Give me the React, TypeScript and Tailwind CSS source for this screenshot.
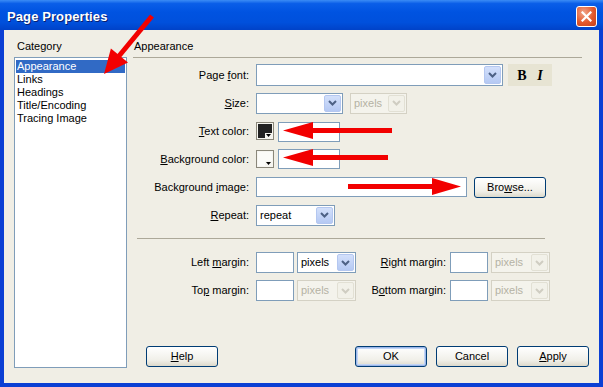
import React from "react";

const U = ({ children }: { children: React.ReactNode }) => <span className="underline underline-offset-[1px]">{children}</span>;

const Chevron = ({ disabled }: { disabled?: boolean }) => (
  <div
    className={
      disabled
        ? "w-[17px] h-full flex items-center justify-center rounded-[2px] bg-[#f2f1e9] border border-[#e2e0d4]"
        : "w-[17px] h-full flex items-center justify-center rounded-[2px] bg-[linear-gradient(#d3e0fb,#b5c9f3)] border border-[#b4c7f0]"
    }
  >
    <svg width="9" height="6" viewBox="0 0 9 6">
      <path d="M1 1 L4.5 4.5 L8 1" stroke={disabled ? "#cfcdc2" : "#4d6185"} strokeWidth="2" fill="none" />
    </svg>
  </div>
);

const Select = ({ w, text, disabled }: { w: string; text?: string; disabled?: boolean }) => (
  <div
    className={
      (disabled
        ? "border-[#d4d1c4] bg-[#f4f3ec] text-[#b5b2a4] "
        : "border-[#7f9db9] bg-white text-black ") + w + " h-[21px] flex border p-[1px]"
    }
  >
    <div className="flex-1 pl-[2px] leading-[17px]">{text}</div>
    <Chevron disabled={disabled} />
  </div>
);

const Input = ({ w, h = "h-[21px]" }: { w: string; h?: string }) => (
  <div className={w + " " + h + " border border-[#7f9db9] bg-white"} />
);

const Swatch = ({ dark }: { dark?: boolean }) => (
  <div className="w-[18px] h-[18px] border border-[#8a877a] bg-[#f6f5f0] p-[1px] relative">
    <div className={(dark ? "bg-[#222]" : "bg-[#fbfbf8]") + " w-full h-full"} />
    <div className="absolute right-[1px] bottom-[1px] w-[7px] h-[5px] bg-[#f6f5f0] flex items-center justify-center">
      <svg width="5" height="3" viewBox="0 0 5 3">
        <path d="M0 0 H5 L2.5 3 Z" fill="#000" />
      </svg>
    </div>
  </div>
);

const Btn = ({ children, def, cls = "" }: { children: React.ReactNode; def?: boolean; cls?: string }) => (
  <div
    className={
      "w-[72px] h-[21px] rounded-[3px] border border-[#003c74] bg-[linear-gradient(#ffffff,#f0efe8_70%,#dcd9cb)] flex items-center justify-center " +
      (def ? "shadow-[inset_0_0_0_1px_#9cb7e9,inset_0_0_0_2px_#c2d5f6] " : "") +
      cls
    }
  >
    {children}
  </div>
);

const Label = ({ children }: { children: React.ReactNode }) => (
  <div className="w-[117px] text-right pr-[1px]">{children}</div>
);

export default function App() {
  return (
    <div className="w-[603px] h-[387px] relative bg-[#0b3fd4] font-['Liberation_Sans',Arial,sans-serif] text-[11px] text-black flex flex-col overflow-hidden">
      {/* title bar */}
      <div className="h-[30px] shrink-0 bg-[linear-gradient(#3b8cf5_0%,#0a5ee8_12%,#0053e1_40%,#0050dc_75%,#0042c8_100%)] flex items-center pl-[7px] pr-[6px]">
        <div className="text-white font-bold text-[13px] tracking-[0.1px] [text-shadow:1px_1px_0_#0a1f6e] flex-1 pt-[3px]">
          Page Properties
        </div>
        <div className="w-[21px] h-[21px] rounded-[3px] border border-white bg-[radial-gradient(circle_at_35%_30%,#f0a58a,#e2582c_55%,#c4401a)] flex items-center justify-center mt-[2px]">
          <svg width="11" height="11" viewBox="0 0 11 11">
            <path d="M1.5 1.5 L9.5 9.5 M9.5 1.5 L1.5 9.5" stroke="#fff" strokeWidth="2.2" strokeLinecap="square" />
          </svg>
        </div>
      </div>

      {/* body */}
      <div className="flex-1 mx-[4px] mb-[4px] bg-[#f0eee5] flex">
        {/* left column */}
        <div className="ml-[10px] w-[113px] flex flex-col">
          <div className="pt-[10px] leading-[13px] pl-[3px]">Category</div>
          <div className="mt-[4px] h-[311px] border border-[#7f9db9] bg-white p-[1px] pt-[2px] leading-[13px]">
            <div className="bg-[#316ac5] text-white pl-[1px] h-[13px]">Appearance</div>
            <div className="pl-[1px]">Links</div>
            <div className="pl-[1px]">Headings</div>
            <div className="pl-[1px]">Title/Encoding</div>
            <div className="pl-[1px]">Tracing Image</div>
          </div>
        </div>

        {/* right column */}
        <div className="ml-[6px] flex-1 flex flex-col">
          <div className="pt-[10px] leading-[13px] pl-[1px]">Appearance</div>
          <div className="mt-[4px] w-[449px] h-px bg-[#aca899]" />

          <div className="mt-[6px] flex flex-col gap-[6px]">
            <div className="h-[22px] flex items-center gap-[6px]">
              <Label>
                Page <U>f</U>ont:
              </Label>
              <div className="w-[247px] h-[22px] flex border border-[#7f9db9] bg-white p-[1px]">
                <div className="flex-1" />
                <Chevron />
              </div>
              <div className="ml-[-1px] w-[44px] h-[22px] bg-[#e7e4d3] flex items-center justify-around px-[4px]">
                <span className="font-['Liberation_Serif',serif] font-bold text-[14px]">B</span>
                <span className="font-['Liberation_Serif',serif] font-bold italic text-[14px]">I</span>
              </div>
            </div>

            <div className="h-[22px] flex items-center gap-[6px]">
              <Label>
                <U>S</U>ize:
              </Label>
              <Select w="w-[87px]" />
              <div className="ml-[1px]">
                <Select w="w-[57px]" text="pixels" disabled />
              </div>
            </div>

            <div className="h-[22px] flex items-center gap-[6px]">
              <Label>
                <U>T</U>ext color:
              </Label>
              <Swatch dark />
              <div className="-ml-[2px] mt-[2px]">
                <Input w="w-[62px]" h="h-[20px]" />
              </div>
            </div>

            <div className="h-[22px] flex items-center gap-[6px]">
              <Label>
                <U>B</U>ackground color:
              </Label>
              <Swatch />
              <div className="-ml-[2px] mt-[0px]">
                <Input w="w-[62px]" h="h-[20px]" />
              </div>
            </div>

            <div className="h-[22px] flex items-center gap-[6px]">
              <Label>
                Background <U>i</U>mage:
              </Label>
              <Input w="w-[211px]" h="h-[20px]" />
              <Btn cls="ml-[1px]">
                Bro<U>w</U>se...
              </Btn>
            </div>

            <div className="h-[22px] flex items-center gap-[6px]">
              <Label>
                <U>R</U>epeat:
              </Label>
              <Select w="w-[79px]" text="repeat" />
            </div>
          </div>

          <div className="mt-[12px] ml-[4px] w-[408px] h-px bg-[#aca899]" />

          <div className="mt-[13px] flex flex-col gap-[7px]">
            <div className="h-[21px] flex items-center">
              <Label>
                Left <U>m</U>argin:
              </Label>
              <div className="ml-[6px]">
                <Input w="w-[38px]" />
              </div>
              <div className="ml-[3px]">
                <Select w="w-[59px]" text="pixels" />
              </div>
              <div className="w-[90px] text-right">
                <U>R</U>ight margin:
              </div>
              <div className="ml-[4px]">
                <Input w="w-[38px]" />
              </div>
              <div className="ml-[3px]">
                <Select w="w-[59px]" text="pixels" disabled />
              </div>
            </div>
            <div className="h-[21px] flex items-center">
              <Label>
                To<U>p</U> margin:
              </Label>
              <div className="ml-[6px]">
                <Input w="w-[38px]" />
              </div>
              <div className="ml-[3px]">
                <Select w="w-[59px]" text="pixels" disabled />
              </div>
              <div className="w-[90px] text-right">
                B<U>o</U>ttom margin:
              </div>
              <div className="ml-[4px]">
                <Input w="w-[38px]" />
              </div>
              <div className="ml-[3px]">
                <Select w="w-[59px]" text="pixels" disabled />
              </div>
            </div>
          </div>

          <div className="mt-[45px] flex">
            <Btn cls="ml-[13px]">
              <U>H</U>elp
            </Btn>
            <Btn def cls="ml-[137px]">
              OK
            </Btn>
            <Btn cls="ml-[9px]">Cancel</Btn>
            <Btn cls="ml-[9px]">
              <U>A</U>pply
            </Btn>
          </div>
        </div>
      </div>

      {/* annotation arrows */}
      <svg className="absolute inset-0 pointer-events-none" width="603" height="387" viewBox="0 0 603 387">
        <line x1="152" y1="16" x2="119" y2="56" stroke="#f20000" strokeWidth="5" />
        <polygon points="104,74 128,62.5 110.9,48.4" fill="#f20000" />

        <rect x="308" y="128" width="84" height="5" fill="#f20000" />
        <polygon points="283,130.5 313,122 313,139" fill="#f20000" />

        <rect x="308" y="155" width="80" height="5" fill="#f20000" />
        <polygon points="283,157.5 313,149 313,166" fill="#f20000" />

        <rect x="348" y="184" width="88" height="5" fill="#f20000" />
        <polygon points="461,186.5 432,178 432,195" fill="#f20000" />
      </svg>
    </div>
  );
}
